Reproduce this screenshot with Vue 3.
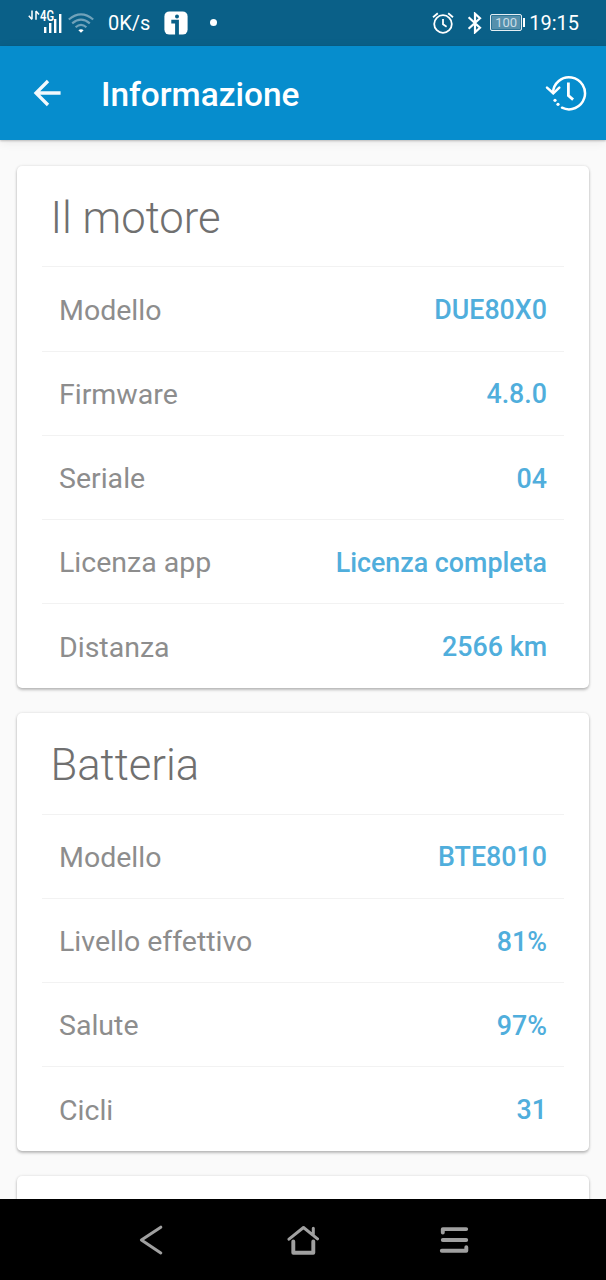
<template>
  <div class="screen">
    <!-- system status bar -->
    <div class="status">
      <svg class="signal" width="36" height="26" viewBox="0 0 36 26">
        <g fill="none" stroke="#fff" stroke-width="1.5">
          <path d="M4 2.6v8.6M4 11.4L.8 7.8M8 11.8V3M8 3l3 3.4" />
        </g>
        <text class="net" x="12" y="12.5" textLength="14" lengthAdjust="spacingAndGlyphs">4G</text>
        <g fill="#fff">
          <rect x="16" y="19" width="2.4" height="6" />
          <rect x="21" y="15" width="2.4" height="10" />
          <rect x="26" y="11" width="2.4" height="14" />
          <rect x="31" y="6" width="2.4" height="19" />
        </g>
      </svg>
      <svg class="wifi" width="26" height="20" viewBox="0 0 26 20">
        <g fill="none" stroke="#fff" stroke-opacity=".42" stroke-width="2.2">
          <path d="M.8 6.5Q13-3.7 25.2 6.5" />
          <path d="M4.2 10.4Q13 2.8 21.8 10.4" />
          <path d="M7.6 14.2Q13 9.4 18.4 14.2" />
        </g>
        <path d="M10.4 17.2q2.6-2 5.2 0L13 19.8z" fill="#fff" />
      </svg>
      <span class="speed">0K/s</span>
      <svg class="info" width="24" height="24" viewBox="0 0 24 24">
        <rect x=".4" y=".4" width="23.2" height="23.2" rx="5" fill="#fff" />
        <circle cx="13" cy="5.5" r="2" fill="#0a6088" />
        <path d="M7.3 10.6H13V24" fill="none" stroke="#0a6088" stroke-width="3.8" />
      </svg>
      <span class="dot"></span>
      <svg class="alarm" width="22" height="22" viewBox="0 0 22 22">
        <g fill="none" stroke="#fff" stroke-width="1.8">
          <circle cx="11" cy="12" r="8.8" />
          <path d="M11 7v5.3l3.6 2.4M1 5.2L5.8 1.2M16.2 1.2L21 5.2" />
        </g>
      </svg>
      <svg class="bluetooth" width="16" height="22" viewBox="0 0 16 22">
        <path
          d="M1.6 5.2L13 15.8L8 20.3V1.7L13 6.2L1.6 16.8"
          fill="none"
          stroke="#fff"
          stroke-width="2.2"
        />
      </svg>
      <span class="battery">100</span>
      <span class="cap"></span>
      <span class="clock">19:15</span>
    </div>

    <!-- app bar -->
    <header class="appbar">
      <svg class="back" width="28" height="28" viewBox="0 0 28 28">
        <path
          d="M27.6 14H3.6M15 2L3 14l12 12"
          fill="none"
          stroke="#fff"
          stroke-opacity=".95"
          stroke-width="3.3"
        />
      </svg>
      <h1>Informazione</h1>
      <svg class="history" width="42" height="36" viewBox="0 0 42 36">
        <g fill="none" stroke="#fff" stroke-width="2.5" stroke-linecap="round">
          <path d="M8 18A16 16 0 1 1 17 32.7" />
          <path d="M2 12.6l6.3 5.7 6-5.7" />
          <path d="M23.4 7.6v13l4.7 4" stroke-linecap="butt" stroke-width="2.8" />
        </g>
        <circle cx="10" cy="25.3" r="1.6" fill="#fff" />
        <circle cx="13" cy="29.3" r="1.6" fill="#fff" />
      </svg>
    </header>

    <main class="content">
      <section v-for="card in cards" :key="card.title" class="card">
        <h2>{{ card.title }}</h2>
        <div v-for="row in card.rows" :key="row.label" class="row">
          <span class="label">{{ row.label }}</span>
          <span class="value">{{ row.value }}</span>
        </div>
      </section>
      <section class="card next"></section>
    </main>

    <!-- navigation keys -->
    <nav class="nav">
      <svg width="32" height="32" viewBox="0 0 32 32">
        <path d="M25.8 3.2L6.4 16l19.4 13" />
      </svg>
      <svg width="32" height="32" viewBox="0 0 32 32">
        <path d="M2 15.2L16.5 3.5L30.5 14.8M26.3 4.2v7" />
        <path class="thick" d="M6.3 17.5v11.2h20V17.5" />
      </svg>
      <svg width="32" height="32" viewBox="0 0 32 32">
        <path class="thick" d="M3.8 8.6V5.1H27.2M3.8 16H27.2M2.8 26.8h24.5v-3.6" />
      </svg>
    </nav>
  </div>
</template>

<script setup>
const cards = [
  {
    title: 'Il motore',
    rows: [
      { label: 'Modello', value: 'DUE80X0' },
      { label: 'Firmware', value: '4.8.0' },
      { label: 'Seriale', value: '04' },
      { label: 'Licenza app', value: 'Licenza completa' },
      { label: 'Distanza', value: '2566 km' },
    ],
  },
  {
    title: 'Batteria',
    rows: [
      { label: 'Modello', value: 'BTE8010' },
      { label: 'Livello effettivo', value: '81%' },
      { label: 'Salute', value: '97%' },
      { label: 'Cicli', value: '31' },
    ],
  },
];
</script>

<style>
body {
  background: #fafafa;
}
</style>

<style scoped>
.screen {
  display: flex;
  flex-direction: column;
  width: 606px;
  height: 1280px;
  overflow: hidden;
  background: #fafafa;
  font-family: Roboto, sans-serif;
}

.status {
  flex: none;
  display: flex;
  align-items: center;
  box-sizing: border-box;
  height: 46px;
  padding: 0 27px 0 28px;
  background: #0a6088;
  color: #fff;
}

.signal {
  margin-top: -5px;
}

.net {
  font-size: 14px;
  font-weight: 600;
  fill: #fff;
}

.wifi {
  margin-left: 4px;
}

.speed {
  margin-left: 14px;
  width: 43px;
  font-size: 20px;
  white-space: nowrap;
}

.info {
  margin-left: 13px;
}

.dot {
  width: 7px;
  height: 7px;
  margin: -1px 0 0 22px;
  border-radius: 50%;
  background: #fff;
}

.alarm {
  margin-left: auto;
}

.bluetooth {
  margin-left: 13px;
}

.battery {
  box-sizing: border-box;
  width: 32px;
  height: 17px;
  margin: -2px 0 0 7px;
  border: 1px solid #e4eef3;
  border-radius: 2px;
  background: #5590ac;
  box-shadow: inset 0 0 0 1px #2c7496;
  color: #cbdde6;
  font-size: 13px;
  line-height: 16px;
  text-align: center;
}

.cap {
  width: 2px;
  height: 9px;
  margin: -2px 0 0 1px;
  background: #fff;
}

.clock {
  margin: -1px 0 0 4px;
  font-size: 20px;
}

.appbar {
  flex: none;
  position: relative;
  display: flex;
  align-items: center;
  box-sizing: border-box;
  height: 94px;
  padding: 0 19px 0 33px;
  background: #068dcd;
  box-shadow: 0 1px 2px rgba(0, 0, 0, 0.22), 0 2px 10px rgba(0, 0, 0, 0.08);
}

h1 {
  margin: 3px 0 0 40px;
  color: #fff;
  font-size: 33.4px;
  font-weight: 500;
}

.history {
  margin-left: auto;
}

.content {
  flex: 1;
  min-height: 0;
  padding: 25.5px 17px 0;
  overflow: hidden;
}

.card {
  box-sizing: border-box;
  margin-bottom: 25.2px;
  padding: 0 25px;
  border-radius: 5px;
  background: #fff;
  box-shadow: 0 2px 3px rgba(0, 0, 0, 0.24), 0 0 3px rgba(0, 0, 0, 0.12);
}

.next {
  height: 100px;
}

h2 {
  height: 100.9px;
  margin: 0;
  padding-left: 8.5px;
  color: #707070;
  font-size: 43.6px;
  font-weight: 300;
  line-height: 106.4px;
}

.row {
  display: flex;
  justify-content: space-between;
  align-items: center;
  box-sizing: border-box;
  height: 84.25px;
  padding: 2px 17px 0;
  border-top: 1px solid #f2f2f2;
}

.label {
  color: #8d8d8d;
  font-size: 28.5px;
}

.value {
  color: #50aedc;
  font-size: 26.8px;
  font-weight: 500;
}

.nav {
  flex: none;
  display: flex;
  justify-content: space-between;
  align-items: center;
  box-sizing: border-box;
  height: 81px;
  padding: 0 135px;
  background: #000;
}

.nav path {
  fill: none;
  stroke: #a0a0a0;
  stroke-width: 3;
  stroke-linecap: round;
  stroke-linejoin: round;
}

.nav .thick {
  stroke-width: 3.9;
}
</style>
